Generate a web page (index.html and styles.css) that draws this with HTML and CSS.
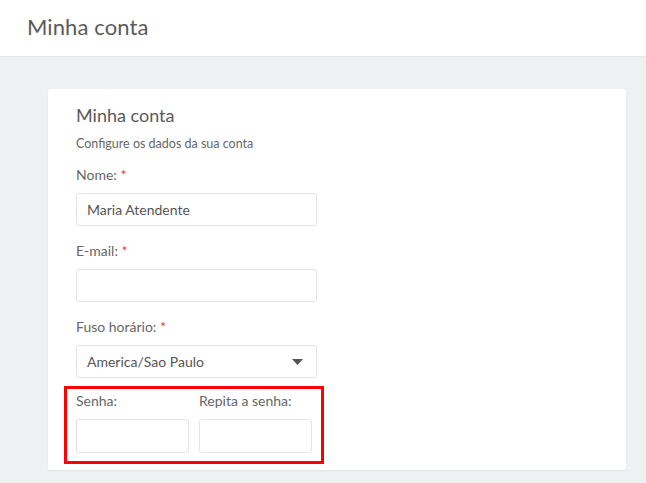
FILE: index.html
```html
<!DOCTYPE html>
<html lang="pt-BR">
<head>
<meta charset="utf-8">
<title>Minha conta</title>
<link rel="stylesheet" href="styles.css">
</head>
<body>
<header class="topbar">
  <h1 class="page-title">Minha conta</h1>
</header>
<main class="content">
  <section class="card">
    <h2 class="card-title">Minha conta</h2>
    <p class="card-subtitle">Configure os dados da sua conta</p>
    <div class="field">
      <label class="label">Nome: <span class="req">*</span></label>
      <input class="input" type="text" value="Maria Atendente">
    </div>
    <div class="field">
      <label class="label">E-mail: <span class="req">*</span></label>
      <input class="input" type="text">
    </div>
    <div class="field">
      <label class="label">Fuso horário: <span class="req">*</span></label>
      <div class="select">
        <span class="select-value">America/Sao Paulo</span>
        <svg class="caret" width="11" height="6" viewBox="0 0 11 6"><path d="M0 0H11L5.5 6Z" fill="#555"/></svg>
      </div>
    </div>
    <div class="password-box">
      <div class="pw-field">
        <label class="label">Senha:</label>
        <input class="input" type="password">
      </div>
      <div class="pw-field">
        <label class="label">Repita a senha:</label>
        <input class="input" type="password">
      </div>
    </div>
  </section>
</main>
</body>
</html>
```
FILE: styles.css
```css
* { box-sizing: border-box; }
html, body { margin: 0; padding: 0; }
body {
  font-family: "Lato", "Open Sans", sans-serif;
  background: #eef1f1;
  color: #666;
  height: 483px;
  overflow: hidden;
}
.topbar {
  background: #fff;
  height: 57px;
  border-bottom: 1px solid #e4e7e8;
  padding: 0 27px 4px;
  display: flex;
  align-items: center;
}
.page-title {
  margin: 0;
  font-weight: 400;
  font-size: 22px;
  color: #5a5a5a;
  letter-spacing: 0.1px;
}
.content {
  padding: 32px 20px 0 48px;
}
.card {
  width: 578px;
  height: 381px;
  background: #fff;
  border-radius: 3px;
  box-shadow: 0 1px 2px rgba(0,0,0,0.06);
  padding: 14px 28px 0 28px;
}
.card-title {
  margin: 0;
  font-weight: 400;
  font-size: 18px;
  color: #5a5a5a;
  line-height: 24px;
}
.card-subtitle {
  margin: 9px 0 0;
  font-size: 12.5px;
  color: #666;
  line-height: 16px;
}
.field {
  margin-top: 14px;
  display: flex;
  flex-direction: column;
}
.field + .field { margin-top: 16px; }
.label {
  font-size: 14px;
  color: #666;
  line-height: 18px;
  margin-bottom: 9px;
}
.req { color: #e0404a; }
.input {
  width: 241px;
  height: 33px;
  border: 1px solid #e2e4e6;
  border-radius: 3px;
  background: #fff;
  font-family: inherit;
  font-size: 14px;
  color: #555;
  padding: 0 10px;
  outline: none;
}
.select {
  width: 241px;
  height: 33px;
  border: 1px solid #e2e4e6;
  border-radius: 3px;
  display: flex;
  align-items: center;
  justify-content: space-between;
  padding: 0 13px 0 10px;
  font-size: 14px;
  color: #555;
}
.caret { display: block; margin-top: 1px; }
.password-box {
  margin-top: 8px;
  margin-left: -12px;
  width: 260px;
  border: 3px solid #f00;
  padding: 3px 9px 8px 9px;
  display: flex;
  gap: 10px;
}
.pw-field {
  display: flex;
  flex-direction: column;
}
.pw-field .input { width: 113px; height: 34px; }
```
